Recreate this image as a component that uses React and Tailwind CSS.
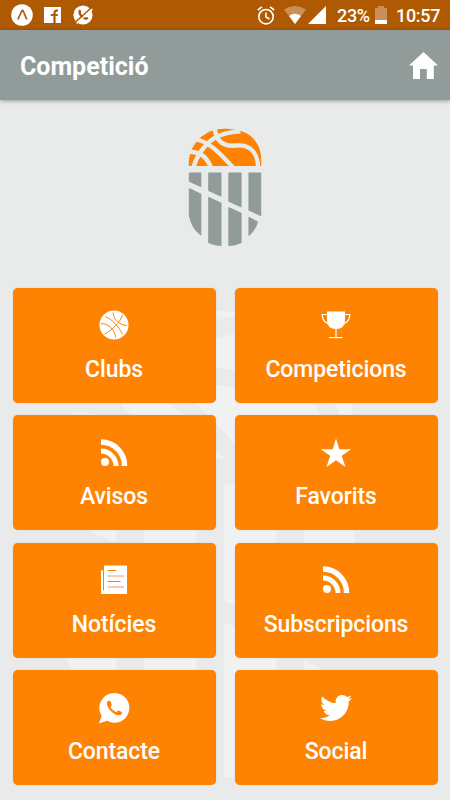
import { FaTwitter } from "react-icons/fa";

const BARS = [
  "M43.500 174H78V214.500L43.500 199Z",
  "M43.500 221L78 237.500V359Q50 338 43.500 300Z",
  "M101.500 174H138V243L101.500 226.500Z",
  "M101.500 247.500L138 264V390.500Q117 390 101.500 382Z",
  "M161.500 174H198V275L161.500 258.500Z",
  "M161.500 278L198 294.500V382Q182 390 161.500 390.500Z",
  "M221.500 174H256.500V301L221.500 285Z",
  "M221.500 306.500L247 320Q239 346 221.500 360Z",
];

function Crest({ ball, bars, className }) {
  return (
    <svg viewBox="40 40 220 355" className={className}>
      <path d="M42 153V142C44 86 90 42 147 42C174 42 215 48 235 72C251 92 258 110 258 135V153Z" fill={ball} />
      <g fill="none" stroke="#e8ebea" strokeWidth="13">
        <path d="M56 158C62 132 84 92 118 70C138 58 162 52 196 50" />
        <path d="M62 74C102 80 132 112 178 162" />
        <path d="M119 36C121 72 137 91 168 93C182 93 192 90 207 93C233 99 248 124 249 158" />
        <path d="M38 111C78 109 98 130 108 158" />
      </g>
      <g fill={bars} stroke={bars} strokeWidth="3" strokeLinejoin="round">
        {BARS.map((d) => (
          <path key={d} d={d} />
        ))}
      </g>
    </svg>
  );
}

function Basketball() {
  return (
    <svg viewBox="0 0 32 32" className="size-8">
      <circle cx="16" cy="16" r="14.500" fill="#fff" />
      <g fill="none" stroke="#ff8303" strokeWidth="1">
        <path d="M6.500 25C14 21 21.500 14.500 24.500 6" />
        <path d="M7.500 7.500C14 10.500 20.500 17 24.500 25.500" />
        <path d="M15 3.500C16 11 21 16 29 16.500" />
        <path d="M3 14.500C11 15 17 20.500 17.500 28.500" />
      </g>
    </svg>
  );
}

function Trophy() {
  return (
    <svg viewBox="0 0 32 32" className="size-8" fill="none" stroke="#fff" strokeWidth="1.200">
      <path d="M7 2.500H25V11Q25 20 16 20Q7 20 7 11Z" fill="#fff" stroke="none" />
      <path d="M7.500 5.500H2.200Q2.400 13 8.500 14.800M24.500 5.500H29.800Q29.600 13 23.500 14.800M16 19V28.500" />
      <path d="M9 28.600H22.500" />
    </svg>
  );
}

function Rss() {
  return (
    <svg viewBox="0 0 32 32" className="size-8" fill="none" stroke="#fff">
      <circle cx="7" cy="25" r="4" fill="#fff" stroke="none" />
      <path d="M3 14A15 15 0 0 1 18 29" strokeWidth="5" />
      <path d="M3 5A23.500 23.500 0 0 1 26.500 29" strokeWidth="5.400" />
    </svg>
  );
}

function Star() {
  return (
    <svg viewBox="0 0 32 32" className="size-8" fill="#fff">
      <path d="M16 1.500L19.300 12.300H31.200L21.700 18.800L25.500 30L16 23.200L6.500 30L10.200 18.800L.8 12.300H12.700Z" />
    </svg>
  );
}

function Paper() {
  return (
    <svg viewBox="0 0 32 32" className="size-8">
      <path d="M6 1.500H29V30H4Q3 30 3 28.500V6.500H6Z" fill="#fff" />
      <path d="M5.500 6.500V26.500" stroke="#ff8303" />
      <path d="M9.500 6.500H18M9.500 17.500H22.500" stroke="#ff8303" />
      <path d="M9.500 12H26M9.500 23H26" stroke="#ffb890" strokeWidth="1.600" />
    </svg>
  );
}

function Whatsapp() {
  return (
    <svg viewBox="0 0 32 32" className="size-8">
      <path d="M16.500 1A14.900 14.900 0 1 1 9 28.800L1 31.500L3.600 23.700A14.900 14.900 0 0 1 16.500 1Z" fill="#fff" />
      <path d="M10.600 8.700C8.700 9.400 8.500 12 9.700 14.400C11.700 18.600 15.700 22.200 19.700 23.100C22.200 23.600 24 22.400 24 20.400C23.800 19.900 20.700 18.300 20.100 18.500C19.500 18.700 18.900 20.200 18.300 20.200C16.400 19.700 13.300 16.700 12.700 15.100C12.800 14.300 13.900 13.600 13.800 12.900C13.600 11.900 12.700 9.300 12.300 8.900C12 8.600 11.100 8.600 10.600 8.700Z" fill="#ff8303" />
    </svg>
  );
}

function Bird() {
  return <FaTwitter className="size-8" color="#fff" />;
}

const ITEMS = [
  ["Clubs", Basketball],
  ["Competicions", Trophy],
  ["Avisos", Rss],
  ["Favorits", Star],
  ["Notícies", Paper],
  ["Subscripcions", Rss],
  ["Contacte", Whatsapp],
  ["Social", Bird],
];

function StatusBar() {
  return (
    <div className="flex h-[30px] items-center bg-[#af5a02] pr-[10px] pl-[11px] text-white">
      <svg viewBox="0 0 22 22" className="size-[22px]">
        <circle cx="11" cy="11" r="10.800" fill="#fff" />
        <path d="M6.800 15.500L11 6.500H12L15.800 15.500" fill="none" stroke="#af5a02" strokeWidth="1.700" />
      </svg>
      <svg viewBox="0 0 17 16" className="ml-[11px] h-4 w-[17px]">
        <path d="M0 0H17V16H0Z" fill="#fff" />
        <path d="M10.500 16V5.500Q10.500 3.300 14 3.300M6.800 8H13.800" fill="none" stroke="#af5a02" strokeWidth="2.200" />
      </svg>
      <svg viewBox="0 0 20 20" className="ml-3 size-5">
        <circle cx="10" cy="10" r="9.600" fill="#fff" />
        <path d="M7 5Q5.500 9 9.500 12Q12 14.500 15 13" fill="none" stroke="#af5a02" strokeWidth="2.400" />
        <path d="M3.500 18.500L19.500 4" stroke="#fff" strokeWidth="1.500" />
        <path d="M2.500 17L18 3" stroke="#af5a02" strokeWidth="1.500" />
      </svg>
      <svg viewBox="0 0 18 19" className="ml-auto h-[19px] w-[18px]" fill="none" stroke="#fff" strokeWidth="1.600">
        <circle cx="9" cy="10.700" r="7.200" />
        <path d="M9 6.500V11L12.500 13M.8 4L5 .8M17.200 4L13 .8" />
      </svg>
      <svg viewBox="0 0 22 18" className="ml-[9px] h-[18px] w-[22px]">
        <path d="M0 3.500Q11-3.500 22 3.500L11 18Z" fill="#ca9057" />
        <path d="M5 10Q11 5.500 17 10L11 18Z" fill="#fff" />
      </svg>
      <svg viewBox="0 0 18 18" className="ml-[2px] size-[18px]">
        <path d="M18 0V18H0Z" fill="#fff" />
      </svg>
      <span className="mt-[2px] ml-[11px] w-[33px] text-[18px] leading-none font-medium whitespace-nowrap tracking-[-0.3px]">23%</span>
      <svg viewBox="0 0 12 18" className="ml-[5px] h-[18px] w-3">
        <path d="M0 2H3V0H9V2H12V14H0Z" fill="#ca9057" />
        <path d="M0 14H12V18H0Z" fill="#fff" />
      </svg>
      <span className="mt-[2px] ml-[9px] w-[44px] text-[18px] leading-none font-medium whitespace-nowrap tracking-[-0.3px]">10:57</span>
    </div>
  );
}

export default function App() {
  return (
    <div className="relative isolate h-[800px] w-[450px] overflow-hidden bg-[#e8ebea] font-['Roboto',sans-serif]">
      <Crest ball="#eff2f1" bars="#eff2f1" className="absolute top-[308px] left-[64px] -z-10 h-[473px] w-[293px]" />
      <StatusBar />
      <header className="flex h-[70px] items-center justify-between bg-[#909b9a] pr-[12px] pl-[20px] text-white shadow-[0_1px_4px_rgba(0,0,0,0.35)]">
        <h1 className="mt-[3px] text-[25px] leading-none font-bold">Competició</h1>
        <svg viewBox="0 0 29 27" className="h-[27px] w-[29px]" fill="#fff">
          <path d="M14.500 0L29 13.500H24.800V27H17.800V17H11V27H4V13.500H0Z" />
        </svg>
      </header>
      <div className="flex h-[187.500px] justify-center pt-[28px]">
        <Crest ball="#ff8303" bars="#909b9a" className="h-[119px] w-[74px]" />
      </div>
      <main className="grid grid-cols-2 gap-x-[19px] gap-y-[12.500px] px-[12.500px]">
        {ITEMS.map(([label, Icon]) => (
          <button key={label} className="flex h-[115px] flex-col items-center rounded-[5px] bg-[#ff8303] pt-[21.500px] text-white shadow-[0_0_1px_rgba(190,110,90,0.6)]">
            <Icon />
            <span className="mt-[16.500px] text-[23px] leading-6 font-medium tracking-[-0.1px]">{label}</span>
          </button>
        ))}
      </main>
    </div>
  );
}
